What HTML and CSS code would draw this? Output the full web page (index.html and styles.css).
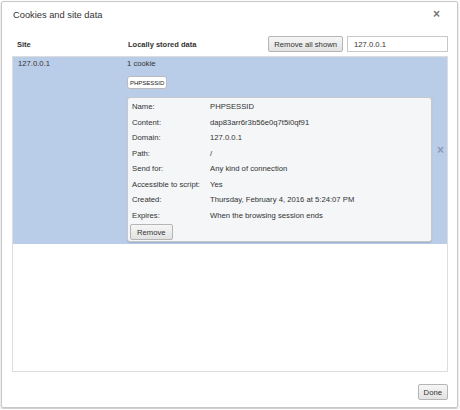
FILE: index.html
```html
<!DOCTYPE html>
<html lang="en">
<head>
  <meta charset="UTF-8">
  <title>Cookies and site data</title>
  <link rel="stylesheet" href="styles.css">
</head>
<body>

<div class="dialog">
  <div class="title-bar">
    <span class="title">Cookies and site data</span>
    <span class="close">&times;</span>
  </div>

  <div class="header-row">
    <span class="col-site">Site</span>
    <span class="col-data">Locally stored data</span>
    <button type="button" class="btn">Remove all shown</button>
    <input type="text" class="search" value="127.0.0.1">
  </div>

  <div class="site-list">
    <div class="site-row selected">
      <div class="col-site">127.0.0.1</div>
      <div class="site-data">
        <div class="count">1 cookie</div>
        <button type="button" class="cookie-chip">PHPSESSID</button>
        <div class="details">
          <div class="detail"><span class="label">Name:</span><span>PHPSESSID</span></div>
          <div class="detail"><span class="label">Content:</span><span>dap83arr6r3b56e0q7t5i0qf91</span></div>
          <div class="detail"><span class="label">Domain:</span><span>127.0.0.1</span></div>
          <div class="detail"><span class="label">Path:</span><span>/</span></div>
          <div class="detail"><span class="label">Send for:</span><span>Any kind of connection</span></div>
          <div class="detail"><span class="label">Accessible to script:</span><span>Yes</span></div>
          <div class="detail"><span class="label">Created:</span><span>Thursday, February 4, 2016 at 5:24:07 PM</span></div>
          <div class="detail"><span class="label">Expires:</span><span>When the browsing session ends</span></div>
          <button type="button" class="btn remove">Remove</button>
        </div>
      </div>
      <span class="row-delete">&times;</span>
    </div>
  </div>

  <div class="footer">
    <button type="button" class="btn">Done</button>
  </div>
</div>

</body>
</html>
```

FILE: styles.css
```css
body {
  margin: 0;
  background: #fff;
  font-family: "Liberation Sans", Arial, sans-serif;
  color: #333;
}
.dialog {
  width: 457px;
  height: 407px;
  margin: 1px;
  border: 1px solid #c8c8c8;
  border-radius: 2px;
  box-shadow: 0 1px 2px rgba(0, 0, 0, 0.25);
  display: flex;
  flex-direction: column;
  padding: 0 9px 0 10px;
  box-sizing: border-box;
}
.title-bar {
  display: flex;
  justify-content: space-between;
  align-items: flex-start;
  height: 30px;
  padding-top: 7px;
  box-sizing: border-box;
}
.title {
  font-size: 9.3px;
  line-height: 12px;
  color: #333;
  margin-left: 1px;
}
.close {
  font-size: 12px;
  line-height: 10px;
  color: #777;
  font-weight: bold;
  margin-right: 8px;
}
.header-row {
  display: flex;
  align-items: center;
  height: 24px;
  font-size: 7.5px;
}
.header-row .col-site {
  font-weight: bold;
  width: 111px;
  padding-left: 5px;
}
.header-row .col-data {
  font-weight: bold;
  flex: 1;
}
.btn {
  font-family: inherit;
  font-size: 7.7px;
  color: #333;
  background: linear-gradient(#f6f6f6, #e2e2e2);
  border: 1px solid #b5b5b5;
  border-radius: 2px;
  padding: 0 5px;
  height: 16px;
}
.search {
  font-family: inherit;
  font-size: 7.7px;
  color: #333;
  width: 101px;
  height: 16px;
  box-sizing: border-box;
  border: 1px solid #c8c8c8;
  margin: 0 0 0 4px;
  padding: 0 6px;
}
.site-list {
  height: 316px;
  border: 1px solid #ddd;
  box-sizing: border-box;
  font-size: 7.7px;
}
.site-row {
  display: flex;
  padding: 2px 0 2px 5px;
  position: relative;
}
.site-row.selected {
  background: #bacde8;
}
.site-row .col-site {
  width: 109px;
  line-height: 9px;
}
.site-data {
  width: 305px;
}
.count {
  line-height: 10px;
}
.cookie-chip {
  display: block;
  font-family: inherit;
  font-size: 6px;
  color: #222;
  background: #fff;
  border: 1px solid #bbb;
  border-radius: 3px;
  height: 13px;
  padding: 0 2px;
  margin: 7px 0 8px;
}
.details {
  background: #f4f6f8;
  border: 1px solid #c6c9cc;
  border-radius: 3px;
  box-shadow: 0 1px 1px rgba(0, 0, 0, 0.15);
  padding: 1px 4px 1px;
}
.detail {
  display: flex;
  height: 15.5px;
  align-items: center;
}
.detail .label {
  width: 78px;
}
.remove {
  margin: 1px 0 0 -2px;
  padding: 0 6px;
}
.row-delete {
  font-size: 12px;
  line-height: 10px;
  font-weight: bold;
  color: #8a9ab2;
  position: absolute;
  right: 3px;
  top: 88px;
}
.footer {
  display: flex;
  justify-content: flex-end;
  padding-top: 12px;
}
```
